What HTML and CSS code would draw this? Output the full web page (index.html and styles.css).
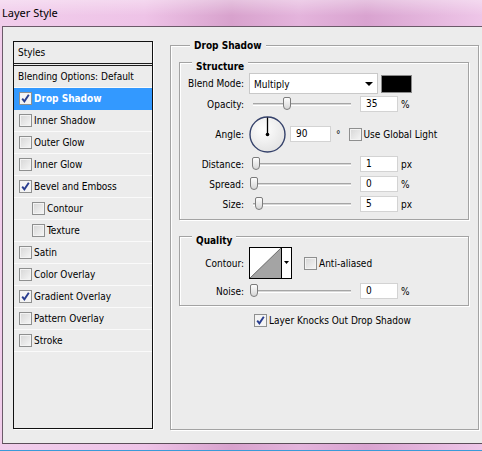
FILE: index.html
```html
<!DOCTYPE html>
<html lang="en">

<head>
    <meta charset="UTF-8">
    <title>Layer Style</title>
    <link rel="stylesheet" href="styles.css">
</head>

<body>
    <div class="window">
        <div class="titlebar">Layer Style</div>

        <div class="client">
            <!-- Styles list -->
            <div class="styles-panel">
                <div class="styles-head">Styles</div>
                <div class="style-item plain">Blending Options: Default</div>
                <div class="style-item selected"><span class="check on"></span>Drop Shadow</div>
                <div class="style-item"><span class="check"></span>Inner Shadow</div>
                <div class="style-item"><span class="check"></span>Outer Glow</div>
                <div class="style-item"><span class="check"></span>Inner Glow</div>
                <div class="style-item"><span class="check on"></span>Bevel and Emboss</div>
                <div class="style-item sub"><span class="check"></span>Contour</div>
                <div class="style-item sub"><span class="check"></span>Texture</div>
                <div class="style-item"><span class="check"></span>Satin</div>
                <div class="style-item"><span class="check"></span>Color Overlay</div>
                <div class="style-item"><span class="check on"></span>Gradient Overlay</div>
                <div class="style-item"><span class="check"></span>Pattern Overlay</div>
                <div class="style-item"><span class="check"></span>Stroke</div>
            </div>

            <!-- Drop shadow settings -->
            <div class="group outer">
                <div class="group-title">Drop Shadow</div>

                <div class="group structure">
                    <div class="group-title">Structure</div>

                    <div class="row row-blend">
                        <span class="label">Blend Mode:</span>
                        <div class="select">Multiply<span class="arrow"></span></div>
                        <div class="swatch"></div>
                    </div>

                    <div class="row">
                        <span class="label">Opacity:</span>
                        <div class="slider"><div class="track"></div><div class="thumb" style="left: 34px"></div></div>
                        <div class="field">35</div>
                        <span class="unit">%</span>
                    </div>

                    <div class="row row-angle">
                        <span class="label">Angle:</span>
                        <svg class="dial" width="37" height="37" viewBox="0 0 37 37">
                            <defs>
                                <radialGradient id="dialfill" cx="0.4" cy="0.35" r="0.7">
                                    <stop offset="0" stop-color="#ffffff"/>
                                    <stop offset="1" stop-color="#e2e2e2"/>
                                </radialGradient>
                            </defs>
                            <circle cx="18.5" cy="18.5" r="17.5" fill="url(#dialfill)" stroke="#34416a" stroke-width="1.4"/>
                            <line x1="18.5" y1="18.5" x2="18.5" y2="1.5" stroke="#000" stroke-width="1.3"/>
                            <circle cx="18.5" cy="18.5" r="1.8" fill="#000"/>
                        </svg>
                        <div class="field wide">90</div>
                        <span class="degree">°</span>
                        <span class="check"></span>
                        <span class="check-label">Use Global Light</span>
                    </div>

                    <div class="row">
                        <span class="label">Distance:</span>
                        <div class="slider"><div class="track"></div><div class="thumb" style="left: 3px"></div></div>
                        <div class="field">1</div>
                        <span class="unit">px</span>
                    </div>

                    <div class="row">
                        <span class="label">Spread:</span>
                        <div class="slider"><div class="track"></div><div class="thumb" style="left: 1px"></div></div>
                        <div class="field">0</div>
                        <span class="unit">%</span>
                    </div>

                    <div class="row">
                        <span class="label">Size:</span>
                        <div class="slider"><div class="track"></div><div class="thumb" style="left: 6px"></div></div>
                        <div class="field">5</div>
                        <span class="unit">px</span>
                    </div>
                </div>

                <div class="group quality">
                    <div class="group-title">Quality</div>

                    <div class="row row-contour">
                        <span class="label">Contour:</span>
                        <svg class="contour" width="43" height="32" viewBox="0 0 43 32">
                            <rect x="0.5" y="0.5" width="42" height="31" fill="#fff" stroke="#000"/>
                            <polygon points="1,31 32,1 32,31" fill="#a4a4a4"/>
                            <line x1="1" y1="31" x2="32" y2="1" stroke="#555" stroke-width="0.8"/>
                            <line x1="32.5" y1="0" x2="32.5" y2="32" stroke="#000"/>
                            <polygon points="35,14 40,14 37.5,17" fill="#000"/>
                        </svg>
                        <span class="check"></span>
                        <span class="check-label">Anti-aliased</span>
                    </div>

                    <div class="row">
                        <span class="label">Noise:</span>
                        <div class="slider"><div class="track"></div><div class="thumb" style="left: 1px"></div></div>
                        <div class="field">0</div>
                        <span class="unit">%</span>
                    </div>
                </div>

                <div class="knockout">
                    <span class="check on"></span>
                    <span class="check-label">Layer Knocks Out Drop Shadow</span>
                </div>
            </div>
        </div>

        <div class="frame-bottom"></div>
    </div>
</body>

</html>
```

FILE: styles.css
```css
body {
    margin: 0;
    background: #ececec;
    font-family: "DejaVu Sans Condensed", "DejaVu Sans", sans-serif;
    font-stretch: condensed;
    font-size: 10px;
    color: #000;
}

.window {
    width: 482px;
    height: 451px;
    display: flex;
    flex-direction: column;
    background: linear-gradient(90deg, #f1cdeb 0, #eec3e7 30%, #d8a2cd 48%, #e4b4dc 62%, #d9a3d0 76%, #eec6e8 100%);
    overflow: hidden;
}

.titlebar {
    height: 26px;
    line-height: 26px;
    padding-left: 2px;
    font-family: "Noto Sans", sans-serif;
    font-stretch: normal;
    font-size: 11px;
    color: #000;
    background: linear-gradient(rgba(255, 255, 255, 0.35), rgba(255, 255, 255, 0) 60%);
}

.client {
    flex: 1;
    display: flex;
    align-items: flex-start;
    margin-left: 2px;
    border-top: 1px solid #6b5a69;
    border-left: 1px solid #6b5a69;
    border-bottom: 1px solid #5c4e5a;
    background: #ececec;
    padding-top: 14px;
}

.frame-bottom {
    height: 6px;
    border-bottom: 1px solid #3a9ad8;
}

/* Styles list */
.styles-panel {
    width: 140px;
    height: 388px;
    box-sizing: border-box;
    margin-left: 10px;
    border: 1px solid #111;
    box-shadow: 1px 1px 0 #fff;
}

.styles-head {
    height: 21px;
    line-height: 21px;
    padding-left: 4px;
    border-bottom: 3px double #1c1c1c;
}

.style-item {
    height: 21px;
    display: flex;
    align-items: center;
    gap: 2px;
    padding-left: 5px;
    border-bottom: 1px solid #fafafa;
    white-space: nowrap;
}

.style-item.plain {
    padding-left: 4px;
}

.style-item.sub {
    padding-left: 18px;
}

.style-item.selected {
    background: #3399ff;
    color: #fff;
    font-weight: bold;
    border-bottom-color: #3399ff;
}

.check {
    display: inline-block;
    width: 13px;
    height: 13px;
    box-sizing: border-box;
    border: 1px solid #8e8f8f;
    background: linear-gradient(135deg, #d6d6d6, #f6f6f6);
    box-shadow: inset 0 0 0 1px #f3f3f3;
    flex: none;
}

.check.on {
    background: #f4f4f4 url("data:image/svg+xml;utf8,<svg xmlns='http://www.w3.org/2000/svg' width='11' height='11'><path d='M2.2 5.6 L4.4 8.4 L8.8 1.8' fill='none' stroke='%23283d8f' stroke-width='1.9'/></svg>") no-repeat center;
}

/* Group boxes */
.group {
    display: flex;
    flex-direction: column;
    border: 1px solid #a3a3a3;
    box-shadow: inset 1px 1px 0 #fff, 1px 1px 0 #fff;
}

.group-title {
    width: fit-content;
    margin: -7px 0 0 12px;
    padding: 0 4px;
    line-height: 13px;
    background: #ececec;
    font-weight: bold;
}

.outer {
    width: 309px;
    height: 385px;
    box-sizing: border-box;
    margin: 4px 0 0 17px;
    padding: 0 9px 0 8px;
}

.outer > .group-title {
    margin-left: 11px;
}

.structure {
    margin-top: 10px;
    padding: 4px 0 5px;
}

.quality {
    margin-top: 16px;
    padding: 4px 0 4px;
}

.row {
    display: flex;
    align-items: center;
    height: 20px;
}

.row-blend {
    height: 21px;
}

.row-angle {
    height: 40px;
}

.row-contour {
    height: 32px;
    margin-bottom: 2px;
}

.label {
    width: 64px;
    margin-right: 5px;
    text-align: right;
    flex: none;
}

.select {
    position: relative;
    width: 129px;
    height: 21px;
    line-height: 21px;
    box-sizing: border-box;
    padding-left: 4px;
    background: #fff;
    border: 1px solid #c9c9c9;
}

.select .arrow {
    position: absolute;
    right: 4px;
    top: 8px;
    border-left: 4px solid transparent;
    border-right: 4px solid transparent;
    border-top: 4px solid #000;
}

.swatch {
    width: 31px;
    height: 18px;
    box-sizing: border-box;
    margin-left: 3px;
    background: #000;
    border: 1px solid #8a8a8a;
}

.slider {
    position: relative;
    width: 106px;
    height: 16px;
}

.track {
    margin: 7px 4px 0;
    height: 1px;
    border-top: 1px solid #a6a6a6;
    border-bottom: 1px solid #fff;
    background: #d8d8d8;
}

.thumb {
    position: absolute;
    top: 1px;
    width: 8px;
    height: 13px;
    box-sizing: border-box;
    border: 1px solid #7c7c7c;
    border-radius: 2px 2px 4px 4px;
    background: linear-gradient(#fdfdfd, #d6d6d6);
}

.field {
    width: 38px;
    height: 16px;
    line-height: 14px;
    box-sizing: border-box;
    margin-left: 5px;
    padding-left: 5px;
    background: #fff;
    border: 1px solid #d3d3d3;
}

.field.wide {
    width: 41px;
    margin-left: 4px;
}

.unit {
    margin-left: 3px;
}

.degree {
    margin: 0 8px 0 5px;
}

.check-label {
    margin-left: 2px;
    white-space: nowrap;
}

.contour {
    display: block;
    margin-right: 12px;
}

.knockout {
    display: flex;
    align-items: center;
    margin: 8px 0 0 75px;
}
```
